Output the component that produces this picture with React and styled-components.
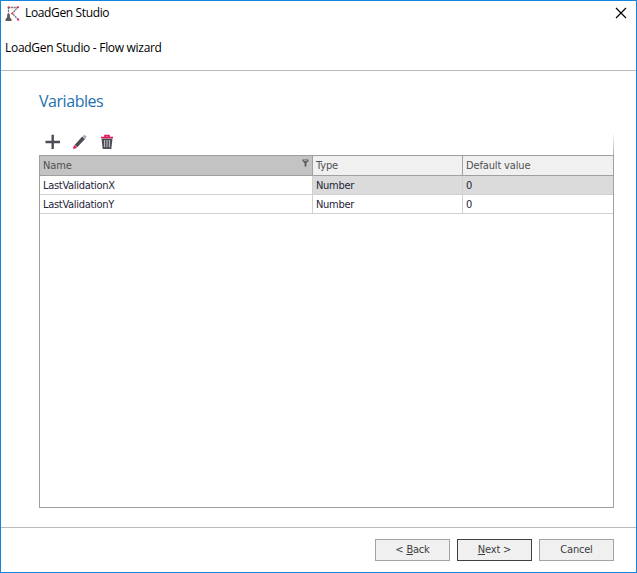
import React from 'react';
import styled, { createGlobalStyle } from 'styled-components';

const GlobalStyle = createGlobalStyle`
	* {
		box-sizing: border-box;
	}
	body {
		margin: 0;
		background: #ffffff;
	}
`;

const Window = styled.div`
	display: flex;
	flex-direction: column;
	width: 637px;
	height: 573px;
	border: 1px solid #1883d7;
	background: #ffffff;
	color: #000000;
	font-family: 'Open Sans', 'Noto Sans', sans-serif;
	font-size: 12px;
	overflow: hidden;
`;

const TitleBar = styled.header`
	display: flex;
	align-items: center;
	height: 24px;
	padding: 0 9px 0 4px;
`;

const Title = styled.h1`
	flex: 1;
	margin: 0 0 0 4px;
	font-size: 12px;
	font-weight: 400;
	line-height: 24px;
	letter-spacing: -0.36px;
`;

const CloseButton = styled.button`
	display: flex;
	padding: 0;
	border: 0;
	background: none;
`;

const WizardHeader = styled.div`
	height: 46px;
	padding: 14px 4px 0;
	border-bottom: 1px solid #b9b9b9;
	line-height: 18px;
	letter-spacing: -0.3px;
`;

const Content = styled.main`
	flex: 1;
	display: flex;
	flex-direction: column;
	padding: 19px 22px 19px 38px;
`;

const Heading = styled.h2`
	margin: 0;
	color: #1e70b0;
	font-size: 16px;
	font-weight: 400;
	line-height: 22px;
	letter-spacing: -0.45px;
`;

const Toolbar = styled.div`
	display: flex;
	align-items: center;
	gap: 11px;
	height: 22px;
	margin: 21px 0 1px;
	padding: 0 0 4px 6px;
	border-right: 1px solid;
	border-image: linear-gradient(#ffffff, #a8a8a8) 1;
`;

const Grid = styled.div`
	flex: 1;
	margin-top: -1px;
	border: 1px solid #a0a0a0;
	font-family: 'DejaVu Sans Condensed', 'DejaVu Sans', sans-serif;
	font-stretch: condensed;
	font-size: 11px;
`;

const Row = styled.div`
	display: grid;
	grid-template-columns: 273px 150px 1fr;
	height: ${props => props.$header ? 20 : 19}px;
	border-bottom: 1px solid ${props => props.$header ? '#a0a0a0' : '#d0d0d0'};
`;

const Cell = styled.div`
	display: flex;
	align-items: center;
	justify-content: space-between;
	padding: 0 3px;
	border-right: 1px solid #d0d0d0;
	background: ${props => props.$selected ? '#dbdbdb' : '#ffffff'};
	color: #25253a;
	letter-spacing: -0.3px;
	white-space: nowrap;
	&:last-child {
		border-right: 0;
	}
`;

const HeaderCell = styled(Cell)`
	border-right-color: #a0a0a0;
	background: ${props => props.$sorted ? '#c3c3c3' : '#f0f0f0'};
	color: #505050;
	letter-spacing: -0.15px;
	svg {
		align-self: flex-start;
		margin-top: 3px;
	}
`;

const Footer = styled.footer`
	display: flex;
	gap: 7px;
	justify-content: flex-end;
	height: 45px;
	padding: 11px 22px 0 0;
	border-top: 1px solid #b9b9b9;
`;

const Button = styled.button`
	width: 75px;
	height: 22px;
	padding: 0;
	border: 1px solid ${props => props.$primary ? '#404040' : '#a3a3a3'};
	background: #f0f0f0;
	color: #3c3c3c;
	font-family: 'DejaVu Sans Condensed', 'DejaVu Sans', sans-serif;
	font-stretch: condensed;
	font-size: 11px;
	line-height: 20px;
	letter-spacing: -0.2px;
`;

const Key = styled.span`
	text-decoration: underline;
	text-underline-offset: 1px;
`;

const Logo = () => (
	<svg width="16" height="17" viewBox="0 0 16 17">
		<path d="M3.5 2.5H12.5L7.3 8.5L13 14.3M3.5 2.5V10" fill="none" stroke="#77777a" strokeWidth="1.3" strokeDasharray="2 .6" />
		<path d="M2.3 9H4.7L5 12.5L6.5 14.3V16H.5V14.3L2 12.5Z" fill="#5a5a5e" />
		<g fill="#e82c63">
			<circle cx="3.5" cy="2.3" r="1" />
			<circle cx="13" cy="2.3" r="1.1" />
			<circle cx="7.3" cy="8.5" r="1.1" />
			<circle cx="13.2" cy="14.7" r="1.1" />
		</g>
	</svg>
);

const CloseIcon = () => (
	<svg width="12" height="12" viewBox="0 0 12 12">
		<path d="M1 1L11 11M11 1L1 11" stroke="#000000" strokeWidth="1.2" />
	</svg>
);

const AddIcon = () => (
	<svg width="16" height="16" viewBox="0 0 16 16">
		<path d="M7.7 .8V15M.5 8H15" stroke="#4c4d54" strokeWidth="2.4" />
	</svg>
);

const EditIcon = () => (
	<svg width="16" height="16" viewBox="0 0 16 16">
		<path d="M2.6 11L10.2 2.6L13 5L5.3 13.3Z" fill="#4c4d54" />
		<path d="M10.7 2.2L12 1L14.4 2L14.2 3.7L13.3 4.6Z" fill="#a9a9ad" />
		<path d="M2.4 11.2L5 13.5L3 14.8H1.2V13Z" fill="#e51b5b" />
	</svg>
);

const DeleteIcon = () => (
	<svg width="16" height="16" viewBox="0 0 16 16">
		<path d="M2.5 4.5H13.5L12.3 15H3.7Z" fill="#4c4d54" />
		<path d="M5.6 6V13.2M8 6V13.2M10.4 6V13.2" stroke="#c5c5c8" strokeWidth="1" />
		<path d="M2 3.5H14M6 3V1.6H10V3" fill="none" stroke="#e51b5b" strokeWidth="1.6" />
	</svg>
);

const FilterIcon = () => (
	<svg width="7" height="8" viewBox="0 0 7 8">
		<path d="M.5 .5H6.5V2L4.4 4V7.5H2.6V4L.5 2Z" fill="#58585c" />
		<path d="M1.8 1.6H5.2" stroke="#b8b8b8" strokeWidth=".9" />
	</svg>
);

const variables = [
	{ name: 'LastValidationX', type: 'Number', value: '0' },
	{ name: 'LastValidationY', type: 'Number', value: '0' },
];

const App = () => (
	<>
		<GlobalStyle />
		<Window>
			<TitleBar>
				<Logo />
				<Title>LoadGen Studio</Title>
				<CloseButton aria-label="Close"><CloseIcon /></CloseButton>
			</TitleBar>
			<WizardHeader><span>LoadGen Studio - Flow wizard</span></WizardHeader>
			<Content>
				<Heading><span>Variables</span></Heading>
				<Toolbar>
					<AddIcon />
					<EditIcon />
					<DeleteIcon />
				</Toolbar>
				<Grid>
					<Row $header>
						<HeaderCell $sorted><span>Name</span><FilterIcon /></HeaderCell>
						<HeaderCell><span>Type</span></HeaderCell>
						<HeaderCell><span>Default value</span></HeaderCell>
					</Row>
					{variables.map((variable, index) => (
						<Row key={variable.name}>
							<Cell><span>{variable.name}</span></Cell>
							<Cell $selected={index === 0}><span>{variable.type}</span></Cell>
							<Cell $selected={index === 0}><span>{variable.value}</span></Cell>
						</Row>
					))}
				</Grid>
			</Content>
			<Footer>
				<Button>&lt; <Key>B</Key>ack</Button>
				<Button $primary><Key>N</Key>ext &gt;</Button>
				<Button>Cancel</Button>
			</Footer>
		</Window>
	</>
);

export default App;
